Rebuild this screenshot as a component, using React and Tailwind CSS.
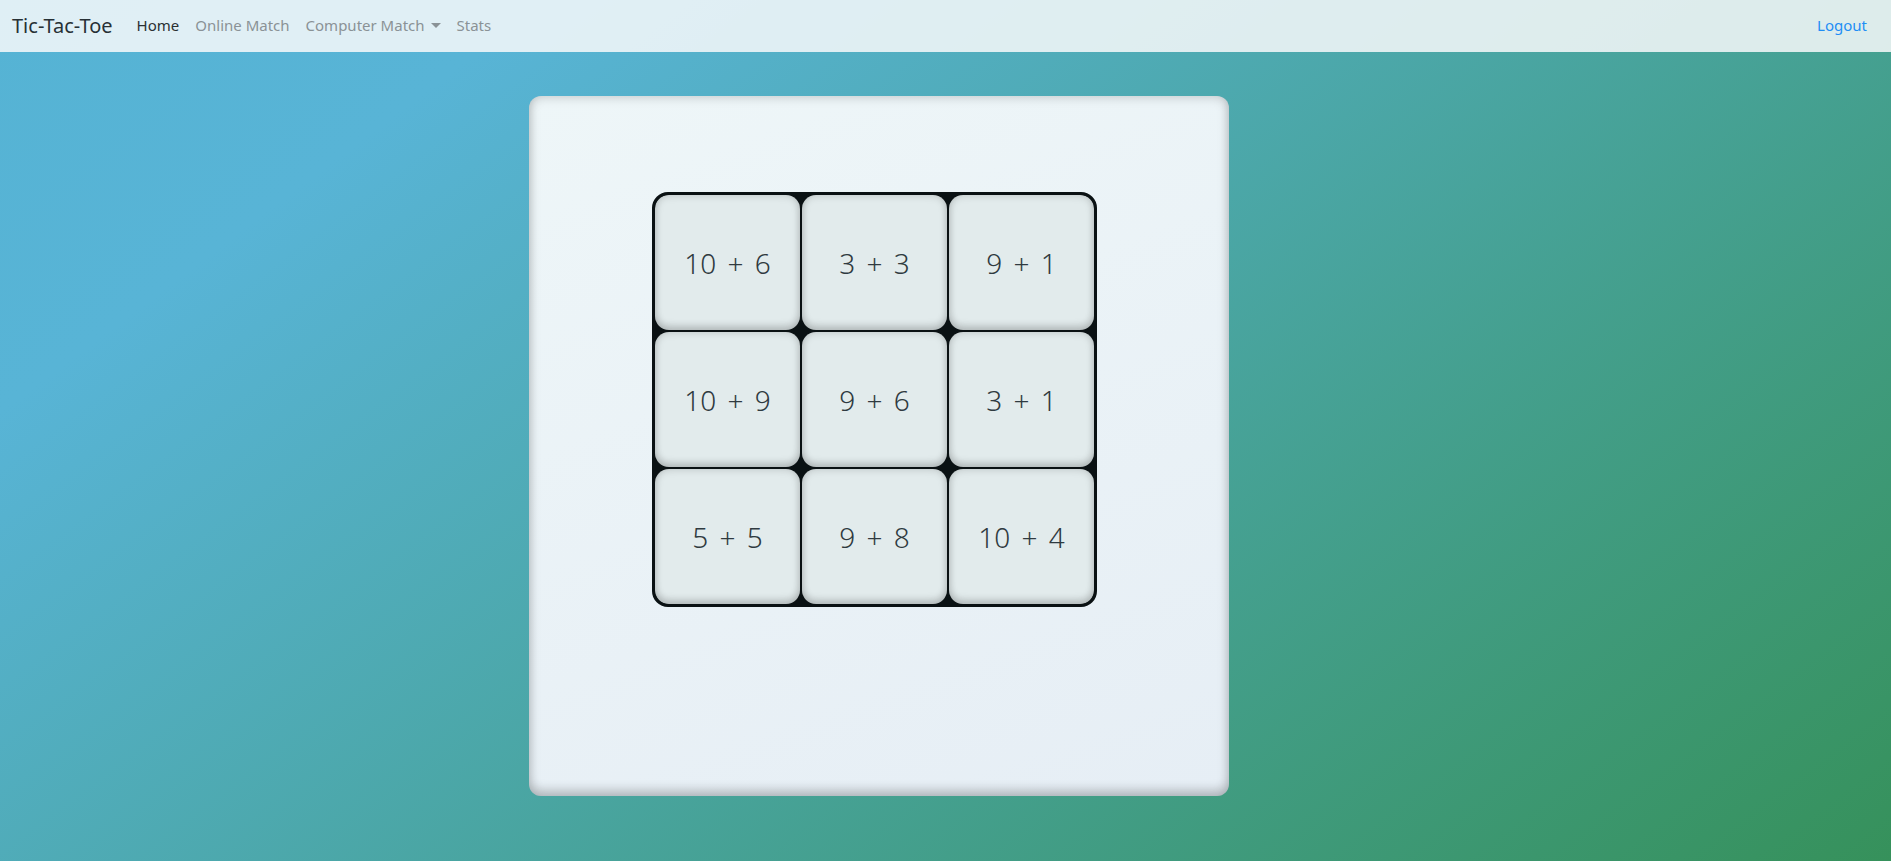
const cells = ["10 + 6", "3 + 3", "9 + 1", "10 + 9", "9 + 6", "3 + 1", "5 + 5", "9 + 8", "10 + 4"];

function NavBar() {
  return (
    <nav className="h-[52px] flex items-center pl-[12px] pr-4 pb-[1px] bg-[#f8f9fa]/85 text-[15px]">
      <a className="text-[20px] text-[#273035] mr-[16px]" href="#">Tic-Tac-Toe</a>
      <a className="px-2 text-[#2b3033]" href="#">Home</a>
      <a className="px-2 text-[#8a9296]" href="#">Online Match</a>
      <a className="px-2 text-[#8a9296] flex items-center" href="#">
        Computer Match
        <span className="ml-[6px] inline-block w-0 h-0 border-x-[5px] border-x-transparent border-t-[5px] border-t-[#8a9296]" />
      </a>
      <a className="px-2 text-[#8a9296]" href="#">Stats</a>
      <a className="ml-auto px-2 text-[#1f8ef5]" href="#">Logout</a>
    </nav>
  );
}

function Cell({ label }) {
  return (
    <div className="flex items-center justify-center rounded-[14px] bg-[#e2ebec] text-[28px] font-light [word-spacing:4px] text-[#2f3a40] shadow-[inset_0_0_8px_rgba(0,0,0,0.18),inset_0_-5px_7px_rgba(0,0,0,0.12)]">
      {label}
    </div>
  );
}

export default function App() {
  return (
    <div
      className="min-h-screen bg-[linear-gradient(143deg,#55b3d4_0%,#58b4d6_18%,#36915b_100%)]"
      style={{ fontFamily: '"Noto Sans", "Open Sans", sans-serif' }}
    >
      <NavBar />
      <main className="pt-[44px] pl-[529px]">
        <div className="w-[700px] h-[700px] rounded-[12px] pt-[96px] pl-[123px] bg-[linear-gradient(160deg,#eef6f8,#e6eef5)] shadow-[inset_0_0_12px_rgba(0,0,0,0.22),inset_0_-8px_10px_rgba(0,0,0,0.12)]">
          <div className="w-[445px] h-[415px] rounded-[16px] border-[3px] border-[#0a1113] bg-[#0a1113] grid grid-cols-3 grid-rows-3 gap-[2px] overflow-hidden">
            {cells.map((c, i) => (
              <Cell key={i} label={c} />
            ))}
          </div>
        </div>
      </main>
    </div>
  );
}
